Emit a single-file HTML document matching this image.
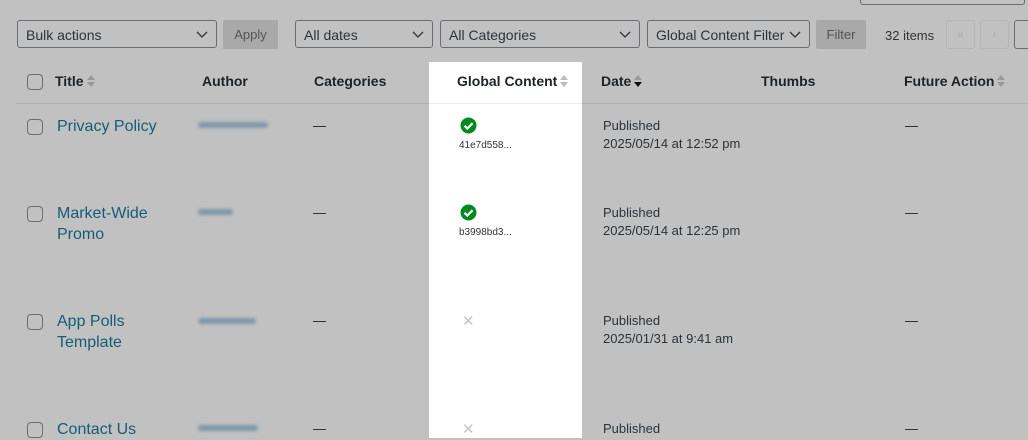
<!DOCTYPE html><html><head><style>
body{margin:0;width:1028px;height:438px;overflow:hidden;background:#c1c1c1;font-family:"Liberation Sans",sans-serif;position:relative;color:#1d2327}
.a{position:absolute;white-space:nowrap}
.sel{position:absolute;height:28px;border:1px solid #6a6d70;border-radius:3px;box-sizing:border-box;font-size:14px;line-height:28px;padding-left:8px;color:#2c3338}
.sel svg{position:absolute;right:8px;top:10px}
.btn{position:absolute;height:29px;background:#a9a9a9;color:#555;font-size:13px;line-height:30px;text-align:center;border-radius:2px}
.th{position:absolute;top:73px;font-weight:bold;font-size:14px}
.th svg{vertical-align:-2px;margin-left:3px}
.cb{position:absolute;width:14px;height:14px;border:1px solid #6d6d6d;border-radius:4px}
.link{position:absolute;color:#135e77;font-size:16px;line-height:21px}
.dash{position:absolute;left:313px;width:13px;height:1px;background:#333}
.dash2{position:absolute;left:905px;width:13px;height:1px;background:#333}
.pub{position:absolute;left:603px;font-size:13px;line-height:18px;color:#2c3338}
.blur{position:absolute;height:6px;background:#7f97aa;filter:blur(1.5px);border-radius:3px}
.spot{position:absolute;left:429px;top:62px;width:153px;height:376px;background:#fff}
.hash{position:absolute;left:459px;font-size:10px;color:#333}
.x{position:absolute;left:462px;font-size:15px;color:#c3c4c7}
</style></head><body>
<div class="a" style="left:860px;top:-10px;width:163px;height:13px;border:1px solid #6a6d70;border-radius:3px"></div>
<div class="sel" style="left:17px;top:20px;width:200px">Bulk actions<svg width="12" height="8"><path d="M1 1l5 5 5-5" fill="none" stroke="#333" stroke-width="1.3"/></svg></div>
<div class="btn" style="left:223px;top:20px;width:55px">Apply</div>
<div class="sel" style="left:295px;top:20px;width:138px">All dates<svg width="12" height="8"><path d="M1 1l5 5 5-5" fill="none" stroke="#333" stroke-width="1.3"/></svg></div>
<div class="sel" style="left:440px;top:20px;width:200px">All Categories<svg width="12" height="8"><path d="M1 1l5 5 5-5" fill="none" stroke="#333" stroke-width="1.3"/></svg></div>
<div class="sel" style="left:647px;top:20px;width:163px">Global Content Filter<svg width="12" height="8"><path d="M1 1l5 5 5-5" fill="none" stroke="#333" stroke-width="1.3"/></svg></div>
<div class="btn" style="left:816px;top:20px;width:50px">Filter</div>
<div class="a" style="left:885px;top:28px;font-size:13px;color:#333">32 items</div>
<div class="a" style="left:946px;top:20px;width:29px;height:29px;border:1px solid #b5b5b5;box-sizing:border-box;border-radius:3px;color:#aaa;text-align:center;line-height:27px;font-size:12px">«</div>
<div class="a" style="left:980px;top:20px;width:29px;height:29px;border:1px solid #b5b5b5;box-sizing:border-box;border-radius:3px;color:#aaa;text-align:center;line-height:27px;font-size:12px">‹</div>
<div class="a" style="left:1014px;top:20px;width:29px;height:29px;border:1px solid #6a6d70;box-sizing:border-box;border-radius:3px"></div>
<div class="a" style="left:16px;top:103px;width:1012px;height:1px;background:#b0b0b0"></div>
<div class="spot"></div>
<div class="a" style="left:429px;top:103px;width:153px;height:1px;background:#ececec"></div>
<div class="cb" style="left:27px;top:74px"></div>
<div class="th" style="left:55px">Title<svg width="8" height="14"><path d="M0 6L4 1 8 6z" fill="#999"/><path d="M0 8L4 13 8 8z" fill="#999"/></svg></div>
<div class="th" style="left:202px">Author</div>
<div class="th" style="left:314px">Categories</div>
<div class="th" style="left:457px">Global Content<svg width="8" height="14"><path d="M0 6L4 1 8 6z" fill="#bbb"/><path d="M0 8L4 13 8 8z" fill="#bbb"/></svg></div>
<div class="th" style="left:601px">Date<svg width="8" height="14"><path d="M0 6L4 1 8 6z" fill="#999"/><path d="M0 8L4 13 8 8z" fill="#111"/></svg></div>
<div class="th" style="left:761px">Thumbs</div>
<div class="th" style="left:904px">Future Action<svg width="8" height="14"><path d="M0 6L4 1 8 6z" fill="#999"/><path d="M0 8L4 13 8 8z" fill="#999"/></svg></div>

<div class="cb" style="left:27px;top:119px"></div>
<div class="link" style="left:57px;top:116px">Privacy Policy</div>
<div class="blur" style="left:198px;top:122px;width:70px"></div>
<div class="dash" style="top:126px"></div>
<svg class="a" style="left:460px;top:117px" width="17" height="17"><circle cx="8.5" cy="8.5" r="8" fill="#008a20"/><path d="M4.5 8.8l2.8 2.8 5.2-5.4" fill="none" stroke="#fff" stroke-width="2.2"/></svg>
<div class="hash" style="top:140px">41e7d558...</div>
<div class="pub" style="top:117px">Published<br>2025/05/14 at 12:52 pm</div>
<div class="dash2" style="top:126px"></div>

<div class="cb" style="left:27px;top:206px"></div>
<div class="link" style="left:57px;top:203px">Market-Wide<br>Promo</div>
<div class="blur" style="left:198px;top:209px;width:35px"></div>
<div class="dash" style="top:213px"></div>
<svg class="a" style="left:460px;top:204px" width="17" height="17"><circle cx="8.5" cy="8.5" r="8" fill="#008a20"/><path d="M4.5 8.8l2.8 2.8 5.2-5.4" fill="none" stroke="#fff" stroke-width="2.2"/></svg>
<div class="hash" style="top:227px">b3998bd3...</div>
<div class="pub" style="top:204px">Published<br>2025/05/14 at 12:25 pm</div>
<div class="dash2" style="top:213px"></div>

<div class="cb" style="left:27px;top:314px"></div>
<div class="link" style="left:57px;top:311px">App Polls<br>Template</div>
<div class="blur" style="left:198px;top:318px;width:58px"></div>
<div class="dash" style="top:321px"></div>
<div class="x" style="top:312px">✕</div>
<div class="pub" style="top:312px">Published<br>2025/01/31 at 9:41 am</div>
<div class="dash2" style="top:321px"></div>

<div class="cb" style="left:27px;top:422px"></div>
<div class="link" style="left:57px;top:419px">Contact Us</div>
<div class="blur" style="left:198px;top:425px;width:60px"></div>
<div class="dash" style="top:429px"></div>
<div class="x" style="top:420px">✕</div>
<div class="pub" style="top:420px">Published</div>
<div class="dash2" style="top:429px"></div>
</body></html>
